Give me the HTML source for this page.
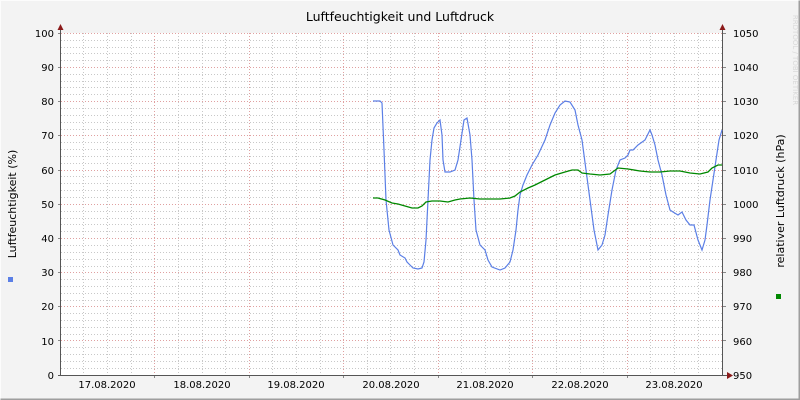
<!DOCTYPE html>
<html><head><meta charset="utf-8"><style>html,body{margin:0;padding:0;background:#f3f3f3}svg{display:block}text{font-family:"DejaVu Sans","Liberation Sans",sans-serif}</style></head><body>
<svg width="800" height="400" viewBox="0 0 800 400" xmlns="http://www.w3.org/2000/svg">
<rect x="0" y="0" width="800" height="400" fill="#f3f3f3"/>
<path d="M0.5 399.5V0.5H799.5" stroke="#fcfcfc" fill="none"/>
<path d="M0.5 399.5H799.5V0.5" stroke="#9e9e9e" fill="none" stroke-width="2"/>
<rect x="61" y="33" width="662" height="342" fill="#ffffff"/>
<g id="grid" stroke-dasharray="1,2" stroke-width="1" shape-rendering="crispEdges">
<g stroke="#c8c8c8">
<path d="M83.5 33V375M107.5 33V375M131.5 33V375M178.5 33V375M202.5 33V375M225.5 33V375M272.5 33V375M296.5 33V375M320.5 33V375M367.5 33V375M390.5 33V375M414.5 33V375M461.5 33V375M485.5 33V375M509.5 33V375M556.5 33V375M580.5 33V375M603.5 33V375M650.5 33V375M674.5 33V375M698.5 33V375"/>
<path d="M61 368.5H723M61 361.5H723M61 354.5H723M61 347.5H723M61 334.5H723M61 327.5H723M61 320.5H723M61 313.5H723M61 300.5H723M61 293.5H723M61 286.5H723M61 279.5H723M61 266.5H723M61 259.5H723M61 252.5H723M61 245.5H723M61 231.5H723M61 224.5H723M61 218.5H723M61 211.5H723M61 197.5H723M61 190.5H723M61 183.5H723M61 176.5H723M61 163.5H723M61 156.5H723M61 149.5H723M61 142.5H723M61 129.5H723M61 122.5H723M61 115.5H723M61 108.5H723M61 94.5H723M61 87.5H723M61 81.5H723M61 74.5H723M61 60.5H723M61 53.5H723M61 47.5H723M61 40.5H723"/>
</g>
<g stroke="#e0a0a0">
<path d="M154.5 33V375M249.5 33V375M343.5 33V375M438.5 33V375M532.5 33V375M627.5 33V375"/>
<path d="M61 340.5H723M61 306.5H723M61 272.5H723M61 238.5H723M61 204.5H723M61 170.5H723M61 135.5H723M61 101.5H723M61 67.5H723M61 33.5H723"/>
</g>
</g>
<g stroke="#888" shape-rendering="crispEdges">
<path d="M58 340.5H61M58 306.5H61M58 272.5H61M58 238.5H61M58 204.5H61M58 170.5H61M58 135.5H61M58 101.5H61M58 67.5H61M58 33.5H61"/>
<path d="M723 340.5H726M723 306.5H726M723 272.5H726M723 238.5H726M723 204.5H726M723 170.5H726M723 135.5H726M723 101.5H726M723 67.5H726M723 33.5H726"/>
<path d="M154.5 375V378M249.5 375V378M343.5 375V378M438.5 375V378M532.5 375V378M627.5 375V378"/>
</g>
<g stroke="#555" shape-rendering="crispEdges">
<path d="M60.5 30V376M722.5 30V376M58 375.5H727"/>
</g>
<path d="M57.5 30L60.5 24L63.5 30Z M719.5 30L722.5 24L725.5 30Z M727 372L733 375.5L727 379Z" fill="#8b1a1a"/>
<polyline fill="none" stroke="#5b7fe6" stroke-width="1.2" points="373,101 380,101 382,103 384,150 386,200 389,230 393,245 398,250 400,255 405,258 407,262 410,265 413,268 418,269 422,268 424,262 426,240 428,200 430,160 432,140 434,128 437,123 440,120 442,135 443,160 445,172 450,172 455,170 458,160 461,140 464,120 467,118 470,135 472,160 474,200 476,230 480,245 485,250 488,260 492,267 500,270 505,268 510,262 513,250 516,230 518,210 520,195 523,185 527,175 532,165 538,155 545,140 550,125 555,113 560,105 565,101 570,102 575,110 578,125 582,140 586,170 590,200 594,230 598,250 602,245 605,235 608,215 612,190 616,170 620,160 625,158 628,155 630,150 633,150 638,145 645,140 650,130 652,135 655,145 658,160 662,175 666,195 670,210 673,212 678,215 682,212 686,220 690,225 694,225 698,240 702,250 705,240 707,225 710,200 713,180 716,160 719,140 722,130"/>
<polyline fill="none" stroke="#008800" stroke-width="1.3" points="373,198 378,198 385,200 392,203 398,204 405,206 412,208 418,208 422,206 426,202 432,201 440,201 448,202 455,200 460,199 470,198 480,199 490,199 500,199 510,198 515,196 520,192 528,188 535,185 545,180 555,175 565,172 572,170 578,170 582,173 590,174 600,175 610,174 618,168 628,169 640,171 650,172 660,172 670,171 680,171 690,173 700,174 708,172 712,168 718,165 722,165"/>
<g font-size="10" fill="#000" text-anchor="end">
<text x="54" y="379">0</text><text x="54" y="345">10</text><text x="54" y="310">20</text><text x="54" y="276">30</text><text x="54" y="242">40</text><text x="54" y="208">50</text><text x="54" y="174">60</text><text x="54" y="139">70</text><text x="54" y="105">80</text><text x="54" y="71">90</text><text x="54" y="37">100</text>
</g>
<g font-size="10" fill="#000">
<text x="733" y="379">950</text><text x="733" y="345">960</text><text x="733" y="310">970</text><text x="733" y="276">980</text><text x="733" y="242">990</text><text x="733" y="208">1000</text><text x="733" y="174">1010</text><text x="733" y="139">1020</text><text x="733" y="105">1030</text><text x="733" y="71">1040</text><text x="733" y="37">1050</text>
</g>
<g font-size="10" fill="#000" text-anchor="middle">
<text x="107" y="388">17.08.2020</text><text x="202" y="388">18.08.2020</text><text x="296" y="388">19.08.2020</text><text x="391" y="388">20.08.2020</text><text x="485" y="388">21.08.2020</text><text x="580" y="388">22.08.2020</text><text x="674" y="388">23.08.2020</text>
</g>
<text x="400" y="21" font-size="12.5" text-anchor="middle" fill="#000">Luftfeuchtigkeit und Luftdruck</text>
<text transform="translate(16,204) rotate(-90)" font-size="11" text-anchor="middle" fill="#000">Luftfeuchtigkeit (%)</text>
<text transform="translate(784,201) rotate(-90)" font-size="11" text-anchor="middle" fill="#000">relativer Luftdruck (hPa)</text>
<text transform="translate(793,60) rotate(90)" font-size="7" text-anchor="middle" fill="#d8d8d8">RRDTOOL / TOBI OETIKER</text>
<rect x="8" y="277" width="5" height="5" fill="#5b7fe6"/>
<rect x="776" y="294" width="5" height="5" fill="#008800"/>
</svg>
</body></html>
